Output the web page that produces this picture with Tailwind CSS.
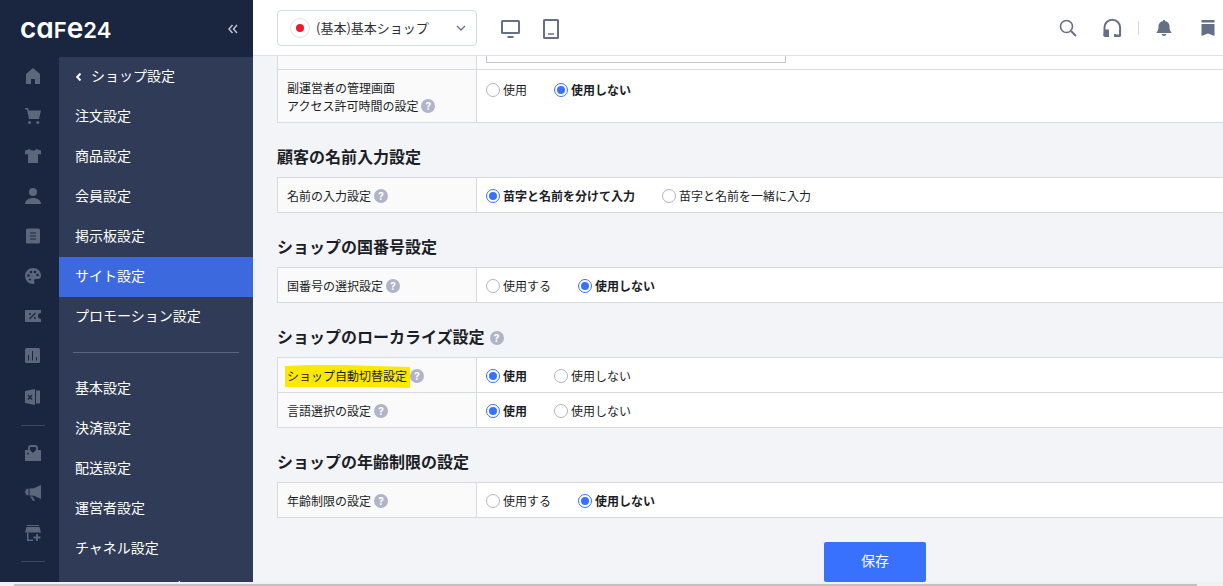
<!DOCTYPE html>
<html lang="ja">
<head>
<meta charset="utf-8">
<meta name="viewport" content="width=device-width, initial-scale=1">
<title>ショップ設定</title>
<script src="https://cdn.jsdelivr.net/npm/@tailwindcss/browser@4"></script>
</head>
<body class="flex h-screen flex-col overflow-hidden bg-[#f3f4f8] font-['Noto_Sans_CJK_JP',sans-serif] text-xs text-[#1b1e26]">
<div class="flex min-h-0 flex-1">
  <aside class="flex w-[253px] shrink-0 flex-col bg-[#1a2640]">
    <div class="flex h-[57px] shrink-0 items-center justify-between pr-3.5 pl-5">
      <a href="#" class="flex items-baseline font-['Inter',sans-serif] text-[28px] leading-8 font-semibold text-white [font-feature-settings:'cv11']"><span>ca</span><span class="text-[22px] uppercase">f</span><span>e</span><span class="text-[22px]">24</span></a>
      <button type="button" aria-label="メニューを閉じる" class="text-[#c3c8d3]"><svg class="block size-3" viewBox="0 0 12 12" fill="none" stroke="currentColor" stroke-width="1.4"><path d="M5.500 2 2 6l3.500 4M10 2 6.500 6l3.500 4"/></svg></button>
    </div>
    <div class="flex min-h-0 flex-1">
      <nav aria-label="メイン" class="flex w-[59px] shrink-0 flex-col items-center overflow-hidden pr-px pl-2 text-[#5d677c]">
        <a href="#" aria-label="ホーム" class="flex h-10 items-center pb-0.5"><svg class="size-4" viewBox="0 0 16 16" fill="currentColor"><path d="M8 0 1 6v10h5v-5h4v5h5V6z"/></svg></a>
        <a href="#" aria-label="注文" class="flex h-10 items-center pb-0.5"><svg class="size-4" viewBox="0 0 16 16" fill="currentColor"><path d="M0 0h3l1 2.500h12L14 11H4L2 1.500H0z"/><circle cx="4.500" cy="14.500" r="1.500"/><circle cx="12.800" cy="14.500" r="1.500"/></svg></a>
        <a href="#" aria-label="商品" class="flex h-10 items-center pb-0.5"><svg class="size-4" viewBox="0 0 16 16" fill="currentColor"><path d="M5 1c.5 2 5.500 2 6 0l5 1.500v4L13 6v9H3V6L0 6.500v-4z"/></svg></a>
        <a href="#" aria-label="会員" class="flex h-10 items-center pb-0.5"><svg class="size-4" viewBox="0 0 16 16" fill="currentColor"><circle cx="8" cy="4" r="4"/><path d="M0 16c0-8 16-8 16 0z"/></svg></a>
        <a href="#" aria-label="掲示板" class="flex h-10 items-center pb-0.5"><svg class="size-4" viewBox="0 0 16 16"><rect x="1" y=".5" width="14" height="15" rx="1.500" fill="currentColor"/><path d="M5 5h6M5 8h6M5 11h6" stroke="#1a2640"/></svg></a>
        <a href="#" aria-label="デザイン" class="flex h-10 items-center pb-0.5"><svg class="size-4" viewBox="0 0 16 16"><path d="M8 0a8 8 0 1 0 0 16c1.500 0 2-1.200 1.300-2.300-.8-1.300 0-2.700 1.500-2.700H13c2 0 3-1.500 3-3.500C16 3 12.500 0 8 0z" fill="currentColor"/><g fill="#1a2640"><circle cx="3.500" cy="7.500" r="1.300"/><circle cx="6" cy="4" r="1.300"/><circle cx="10" cy="4" r="1.300"/><circle cx="12.700" cy="7" r="1.300"/><circle cx="5" cy="11.500" r="1.100"/></g></svg></a>
        <a href="#" aria-label="プロモーション" class="flex h-10 items-center pb-0.5"><svg class="size-4" viewBox="0 0 16 16"><path d="M0 2h16v3a3 3 0 0 0 0 6v3H0z" fill="currentColor"/><path d="m10.500 5-6 6" stroke="#1a2640" stroke-width="1.300"/><circle cx="5" cy="6" r="1" fill="#1a2640"/><circle cx="9.800" cy="10" r="1" fill="#1a2640"/></svg></a>
        <a href="#" aria-label="統計" class="flex h-10 items-center pb-0.5"><svg class="size-4" viewBox="0 0 16 16"><rect width="15" height="15" rx="1.500" fill="currentColor"/><path d="M3.500 7v5.500M7.500 3v9.500M11.500 9v3.500" stroke="#1a2640"/></svg></a>
        <a href="#" aria-label="エクセル" class="flex h-10 items-center"><svg class="size-4" viewBox="0 0 16 16"><path d="M0 2 10 0v16L0 14zM11 1.500h4v13h-4z" fill="currentColor"/><path d="m3 6 4 4.500M7 6l-4 4.500" stroke="#1a2640" stroke-width="1.300"/></svg></a>
        <hr class="mt-2 mb-[7px] w-6 shrink-0 border-[#3c475d]">
        <a href="#" aria-label="アプリ" class="flex h-10 items-center"><svg class="size-4" viewBox="0 0 16 16"><path d="M4 5V3q0-2 2-2h4q2 0 2 2v2" fill="none" stroke="currentColor" stroke-width="1.800"/><path d="M0 5h5l3 3 3-3h5v11H0z" fill="currentColor"/><circle cx="3" cy="8.500" r=".9" fill="#1a2640"/></svg></a>
        <a href="#" aria-label="マーケティング" class="flex h-10 items-center"><svg class="size-4" viewBox="0 0 16 16" fill="currentColor"><path d="M3.500 3.500v7C-1 10.500-1 3.500 3.500 3.500zM4.500 3.500 9 3.200 16 0v14l-7-3.200-4.500-.3zM5 11.500h2.500l2.500 4-1.500.8z"/></svg></a>
        <a href="#" aria-label="チャネル" class="flex h-10 items-center"><svg class="size-4" viewBox="0 0 16 16" fill="currentColor"><path d="M2 0h12v1H2zM1.500 2h13L16 7.500H0zM2 8h1.500v6.500H8V16H2z"/><path d="M12 9v7M8.500 12.500h7" stroke="currentColor" stroke-width="1.800"/></svg></a>
        <hr class="mt-2 w-6 shrink-0 border-[#3c475d]">
      </nav>
      <nav aria-label="ショップ設定" class="min-w-0 flex-1 overflow-hidden bg-[#2f3b57] text-sm text-white">
        <a href="#" class="flex h-10 items-center gap-2 px-4 pb-1"><svg class="mt-1 h-2 w-2" viewBox="0 0 8 8" fill="none" stroke="currentColor" stroke-width="2"><path d="M5.500.5 2.200 4l3.300 3.500"/></svg>ショップ設定</a>
        <a href="#" class="flex h-10 items-center px-4 pb-1">注文設定</a>
        <a href="#" class="flex h-10 items-center px-4 pb-1">商品設定</a>
        <a href="#" class="flex h-10 items-center px-4 pb-1">会員設定</a>
        <a href="#" class="flex h-10 items-center px-4 pb-1">掲示板設定</a>
        <a href="#" aria-current="page" class="flex h-10 items-center bg-[#3d69de] px-4 pb-1">サイト設定</a>
        <a href="#" class="flex h-10 items-center px-4 pb-1">プロモーション設定</a>
        <hr class="mx-3.5 my-[15px] border-[#5c667c]">
        <a href="#" class="flex h-10 items-center px-4 pb-0.5">基本設定</a>
        <a href="#" class="flex h-10 items-center px-4 pb-0.5">決済設定</a>
        <a href="#" class="flex h-10 items-center px-4 pb-0.5">配送設定</a>
        <a href="#" class="flex h-10 items-center px-4 pb-0.5">運営者設定</a>
        <a href="#" class="flex h-10 items-center px-4 pb-0.5">チャネル設定</a>
        <a href="#" class="flex h-10 items-center px-4 pb-0.5">セキュリティ設定</a>
      </nav>
    </div>
  </aside>

  <div class="flex min-w-0 flex-1 flex-col">
    <header class="flex h-14 shrink-0 items-center border-b border-[#dfe1e6] bg-white pr-2 pl-6 text-[#667085]">
      <button type="button" aria-haspopup="listbox" class="flex h-9 w-[200px] items-center gap-1.5 rounded border border-[#d6dae1] pr-2.5 pl-3 text-[#2b2f38]">
        <span class="flex size-5 items-center justify-center rounded-full border border-[#dfe2e8]"><span class="size-2 rounded-full bg-[#e81c2e]"></span></span>
        <span class="flex-1 text-left text-[13px] leading-5 whitespace-nowrap">(基本)基本ショップ</span>
        <svg class="h-2 w-2.5 shrink-0" viewBox="0 0 10 8" fill="none" stroke="#667085" stroke-width="1.300"><path d="m1 2 4 4 4-4"/></svg>
      </button>
      <button type="button" aria-label="PC" class="ml-6 pt-0.5"><svg class="block size-5" viewBox="0 0 20 20" fill="none" stroke="currentColor" stroke-width="2"><rect x="1" y="2" width="17" height="12" rx=".5"/><path d="M6.500 18h6"/></svg></button>
      <button type="button" aria-label="モバイル" class="ml-5 pt-0.5"><svg class="block size-5" viewBox="0 0 20 20" fill="none" stroke="currentColor" stroke-width="2"><rect x="3" y="1" width="14" height="18" rx=".5"/><path d="M7 15h6" stroke-width="1.500"/></svg></button>
      <div class="ml-auto flex items-center">
        <button type="button" aria-label="検索"><svg class="block size-[18px]" viewBox="0 0 18 18" fill="none" stroke="currentColor" stroke-width="1.600"><circle cx="7.500" cy="7.500" r="6"/><path d="m12 12 5 5" stroke-width="2"/></svg></button>
        <button type="button" aria-label="サポート" class="ml-[25px]"><svg class="block size-[20px]" viewBox="0 0 20 20"><path d="M2.500 18V9.500a7.800 7.800 0 0 1 15.600 0V17.500h-4.500" fill="none" stroke="currentColor" stroke-width="2"/><path d="M2 11.500h5V19H3q-1.500 0-1.500-1.500zM12 16h2v3h-2zM17 12h2v5.500L17.500 19H14v-2h3z" fill="currentColor"/></svg></button>
        <span class="ml-4 h-3.5 w-px bg-[#d5d8de]"></span>
        <button type="button" aria-label="通知" class="ml-4"><svg class="block size-[18px]" viewBox="0 0 18 18" fill="currentColor"><path d="M8 1h2v1c3 .5 4.500 2.700 4.500 5.500 0 3 .5 4.500 1.800 5.500v1H1.700v-1c1.300-1 1.800-2.500 1.800-5.500C3.500 4.700 5 2.500 8 2zM6.500 15h5q-.7 2-2.500 2t-2.500-2z"/></svg></button>
        <button type="button" aria-label="ブックマーク" class="ml-7"><svg class="block h-[18px] w-3.5" viewBox="0 0 14 18" fill="currentColor"><path d="M.5 1h13v2.500H.5zM.5 5h13v12L7 14.500.5 17z"/></svg></button>
      </div>
    </header>

    <main class="min-h-0 flex-1 overflow-hidden pl-6">
      <form class="w-[1196px]">
        <table class="-mt-[21px] w-full table-fixed border-collapse bg-white leading-[18px]">
          <colgroup><col class="w-[199px]"><col></colgroup>
          <tr>
            <th class="h-[34px] border border-[#d7dade] bg-[#fafafa]"></th>
            <td class="border border-[#d7dade] p-0 pl-[9px]"><input type="text" aria-label="管理画面アクセス設定" class="block h-5 w-[300px] border border-[#c3c6cd]"></td>
          </tr>
          <tr>
            <th scope="row" class="border border-[#d7dade] bg-[#fafafa] pt-[9px] pb-[7px] pl-[9px] text-left font-normal">副運営者の管理画面<br><span class="flex items-center gap-[3px]">アクセス許可時間の設定<button type="button" aria-label="ヘルプ" class="flex size-3.5 items-center justify-center rounded-full bg-[#b0b4c9] font-['Inter',sans-serif] text-[10px] leading-none font-bold text-white">?</button></span></th>
            <td class="border border-[#d7dade] pt-[11px] pl-[9px] align-top"><div class="flex gap-[27px]">
              <label class="flex items-center gap-[3px]"><input type="radio" name="access" class="size-3.5 appearance-none rounded-full border border-[#b0b4c9] bg-clip-content p-0.5 checked:border-[#3971ff] checked:bg-[#3971ff]">使用</label>
              <label class="flex items-center gap-[3px] font-bold"><input type="radio" name="access" checked class="size-3.5 appearance-none rounded-full border border-[#b0b4c9] bg-clip-content p-0.5 checked:border-[#3971ff] checked:bg-[#3971ff]">使用しない</label>
            </div></td>
          </tr>
        </table>

        <h2 class="flex h-[54px] items-center pt-3 text-base font-bold">顧客の名前入力設定</h2>
        <table class="w-full table-fixed border-collapse bg-white leading-[18px]">
          <colgroup><col class="w-[199px]"><col></colgroup>
          <tr>
            <th scope="row" class="h-[35px] border border-[#d7dade] bg-[#fafafa] p-0 pt-0.5 pl-[9px] text-left font-normal"><span class="flex items-center gap-[3px]">名前の入力設定<button type="button" aria-label="ヘルプ" class="flex size-3.5 items-center justify-center rounded-full bg-[#b0b4c9] font-['Inter',sans-serif] text-[10px] leading-none font-bold text-white">?</button></span></th>
            <td class="border border-[#d7dade] p-0 pt-0.5 pl-[9px]"><div class="flex gap-[27px]">
              <label class="flex items-center gap-[3px] font-bold"><input type="radio" name="name" checked class="size-3.5 appearance-none rounded-full border border-[#b0b4c9] bg-clip-content p-0.5 checked:border-[#3971ff] checked:bg-[#3971ff]">苗字と名前を分けて入力</label>
              <label class="flex items-center gap-[3px]"><input type="radio" name="name" class="size-3.5 appearance-none rounded-full border border-[#b0b4c9] bg-clip-content p-0.5 checked:border-[#3971ff] checked:bg-[#3971ff]">苗字と名前を一緒に入力</label>
            </div></td>
          </tr>
        </table>

        <h2 class="flex h-[54px] items-center pt-3 text-base font-bold">ショップの国番号設定</h2>
        <table class="w-full table-fixed border-collapse bg-white leading-[18px]">
          <colgroup><col class="w-[199px]"><col></colgroup>
          <tr>
            <th scope="row" class="h-[35px] border border-[#d7dade] bg-[#fafafa] p-0 pt-0.5 pl-[9px] text-left font-normal"><span class="flex items-center gap-[3px]">国番号の選択設定<button type="button" aria-label="ヘルプ" class="flex size-3.5 items-center justify-center rounded-full bg-[#b0b4c9] font-['Inter',sans-serif] text-[10px] leading-none font-bold text-white">?</button></span></th>
            <td class="border border-[#d7dade] p-0 pt-0.5 pl-[9px]"><div class="flex gap-[27px]">
              <label class="flex items-center gap-[3px]"><input type="radio" name="country" class="size-3.5 appearance-none rounded-full border border-[#b0b4c9] bg-clip-content p-0.5 checked:border-[#3971ff] checked:bg-[#3971ff]">使用する</label>
              <label class="flex items-center gap-[3px] font-bold"><input type="radio" name="country" checked class="size-3.5 appearance-none rounded-full border border-[#b0b4c9] bg-clip-content p-0.5 checked:border-[#3971ff] checked:bg-[#3971ff]">使用しない</label>
            </div></td>
          </tr>
        </table>

        <h2 class="flex h-[54px] items-center gap-[5px] pt-3 text-base font-bold">ショップのローカライズ設定<button type="button" aria-label="ヘルプ" class="mt-1 flex size-3.5 items-center justify-center rounded-full bg-[#b0b4c9] font-['Inter',sans-serif] text-[10px] leading-none font-bold text-white">?</button></h2>
        <table class="w-full table-fixed border-collapse bg-white leading-[18px]">
          <colgroup><col class="w-[199px]"><col></colgroup>
          <tr>
            <th scope="row" class="h-[35px] border border-[#d7dade] bg-[#fafafa] p-0 pt-0.5 pl-[9px] text-left font-normal"><span class="flex items-center gap-[3px]"><mark class="relative isolate bg-transparent text-inherit"><svg class="absolute -top-0.5 -left-0.5 -z-10 h-[23px] w-[125px]" viewBox="0 0 125 23" fill="#fde800"><path d="M0 1 22 0l38 0 30 1 35 1v21l-45-1-40 0-40 0z"/></svg>ショップ自動切替設定</mark><button type="button" aria-label="ヘルプ" class="flex size-3.5 items-center justify-center rounded-full bg-[#b0b4c9] font-['Inter',sans-serif] text-[10px] leading-none font-bold text-white">?</button></span></th>
            <td class="border border-[#d7dade] p-0 pt-0.5 pl-[9px]"><div class="flex gap-[27px]">
              <label class="flex items-center gap-[3px] font-bold"><input type="radio" name="auto" checked class="size-3.5 appearance-none rounded-full border border-[#b0b4c9] bg-clip-content p-0.5 checked:border-[#3971ff] checked:bg-[#3971ff]">使用</label>
              <label class="flex items-center gap-[3px]"><input type="radio" name="auto" class="size-3.5 appearance-none rounded-full border border-[#b0b4c9] bg-clip-content p-0.5 checked:border-[#3971ff] checked:bg-[#3971ff]">使用しない</label>
            </div></td>
          </tr>
          <tr>
            <th scope="row" class="h-[35px] border border-[#d7dade] bg-[#fafafa] p-0 pt-0.5 pl-[9px] text-left font-normal"><span class="flex items-center gap-[3px]">言語選択の設定<button type="button" aria-label="ヘルプ" class="flex size-3.5 items-center justify-center rounded-full bg-[#b0b4c9] font-['Inter',sans-serif] text-[10px] leading-none font-bold text-white">?</button></span></th>
            <td class="border border-[#d7dade] p-0 pt-0.5 pl-[9px]"><div class="flex gap-[27px]">
              <label class="flex items-center gap-[3px] font-bold"><input type="radio" name="lang" checked class="size-3.5 appearance-none rounded-full border border-[#b0b4c9] bg-clip-content p-0.5 checked:border-[#3971ff] checked:bg-[#3971ff]">使用</label>
              <label class="flex items-center gap-[3px]"><input type="radio" name="lang" class="size-3.5 appearance-none rounded-full border border-[#b0b4c9] bg-clip-content p-0.5 checked:border-[#3971ff] checked:bg-[#3971ff]">使用しない</label>
            </div></td>
          </tr>
        </table>

        <h2 class="flex h-[54px] items-center pt-3 text-base font-bold">ショップの年齢制限の設定</h2>
        <table class="w-full table-fixed border-collapse bg-white leading-[18px]">
          <colgroup><col class="w-[199px]"><col></colgroup>
          <tr>
            <th scope="row" class="h-[35px] border border-[#d7dade] bg-[#fafafa] p-0 pt-0.5 pl-[9px] text-left font-normal"><span class="flex items-center gap-[3px]">年齢制限の設定<button type="button" aria-label="ヘルプ" class="flex size-3.5 items-center justify-center rounded-full bg-[#b0b4c9] font-['Inter',sans-serif] text-[10px] leading-none font-bold text-white">?</button></span></th>
            <td class="border border-[#d7dade] p-0 pt-0.5 pl-[9px]"><div class="flex gap-[27px]">
              <label class="flex items-center gap-[3px]"><input type="radio" name="age" class="size-3.5 appearance-none rounded-full border border-[#b0b4c9] bg-clip-content p-0.5 checked:border-[#3971ff] checked:bg-[#3971ff]">使用する</label>
              <label class="flex items-center gap-[3px] font-bold"><input type="radio" name="age" checked class="size-3.5 appearance-none rounded-full border border-[#b0b4c9] bg-clip-content p-0.5 checked:border-[#3971ff] checked:bg-[#3971ff]">使用しない</label>
            </div></td>
          </tr>
        </table>
        <button type="submit" class="mx-auto mt-6 block h-10 w-[102px] rounded-xs bg-[#3971ff] pb-1 text-sm text-white">保存</button>
      </form>
    </main>
  </div>
</div>
<div class="h-1 shrink-0 bg-[#f1f1f1] pt-0.5 pr-[26px] pl-3.5"><div class="h-0.5 bg-[#c1c1c1]"></div></div>
</body>
</html>
